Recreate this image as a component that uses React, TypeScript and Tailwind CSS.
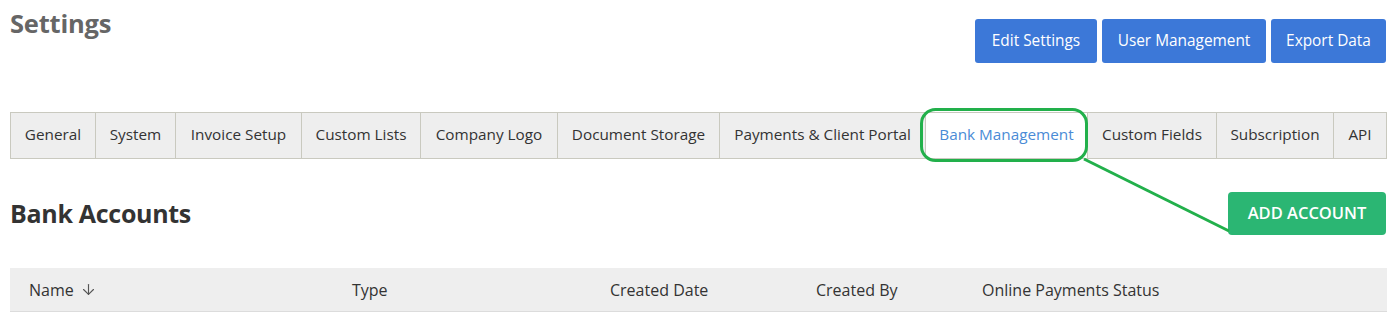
import { ArrowDown } from 'lucide-react';

const tabs: [string, string][] = [
  ['General', 'w-[84px]'],
  ['System', 'w-[80px]'],
  ['Invoice Setup', 'w-[126px]'],
  ['Custom Lists', 'w-[119px]'],
  ['Company Logo', 'w-[137px]'],
  ['Document Storage', 'w-[162px]'],
  ['Payments & Client Portal', 'w-[206px]'],
  ['Bank Management', 'w-[162px]'],
  ['Custom Fields', 'w-[129px]'],
  ['Subscription', 'w-[117px]'],
  ['API', 'grow'],
];

const active = 'Bank Management';

export default function App() {
  return (
    <div className="relative min-h-screen bg-white pl-[10px] pr-[8px] font-['Open_Sans',sans-serif] text-[#333]">
      <div className="flex items-start justify-between">
        <h1 className="pt-[7px] text-[25.5px] font-bold leading-[32px] tracking-[-0.2px] text-[#666]">Settings</h1>
        <div className="mr-[1px] mt-[19px] flex gap-[5px]">
          <button className="h-[44px] w-[122px] rounded-[3px] bg-[#3c78d8] text-[15.4px] text-white">Edit Settings</button>
          <button className="h-[44px] w-[164px] rounded-[3px] bg-[#3c78d8] text-[15.4px] text-white">User Management</button>
          <button className="h-[44px] w-[115px] rounded-[3px] bg-[#3c78d8] text-[15.4px] text-white">Export Data</button>
        </div>
      </div>

      <div className="mt-[49px] flex h-[47px] w-[1377px] border border-[#c9c9bf] bg-[#eeeeee]">
        {tabs.map(([t, w], i) => (
          <div
            key={t}
            className={
              'flex shrink-0 items-center justify-center pb-[3px] text-[15.3px] ' +
              w +
              (i > 0 ? ' border-l border-[#c9c9bf]' : '') +
              (t === active ? ' bg-white text-[#4a8bd6]' : ' text-[#333]')
            }
          >
            {t}
          </div>
        ))}
      </div>

      <div className="mt-[33px] flex items-center justify-between">
        <h2 className="text-[25px] font-bold tracking-[-0.3px] text-[#333]">Bank Accounts</h2>
        <button className="mr-[1px] h-[43px] w-[158px] rounded-[4px] bg-[#2bb673] text-[16.5px] font-semibold uppercase text-white">
          Add Account
        </button>
      </div>

      <div className="mt-[33px] flex h-[44px] w-[1377px] items-center border-b border-[#dcdcdc] bg-[#eeeeee] text-[16px] text-[#333]">
        <div className="flex w-[342px] items-center gap-[6px] pl-[19px]">
          Name <ArrowDown size={17} strokeWidth={1.6} className="text-[#555]" />
        </div>
        <div className="w-[258px]">Type</div>
        <div className="w-[206px]">Created Date</div>
        <div className="w-[166px]">Created By</div>
        <div>Online Payments Status</div>
      </div>

      <svg className="pointer-events-none absolute left-0 top-0" width="1395" height="318">
        <rect x="921.5" y="109.5" width="165" height="51" rx="14" fill="none" stroke="#22b04b" strokeWidth="3" />
        <line x1="1084" y1="159" x2="1229" y2="231" stroke="#22b04b" strokeWidth="3" />
      </svg>
    </div>
  );
}
